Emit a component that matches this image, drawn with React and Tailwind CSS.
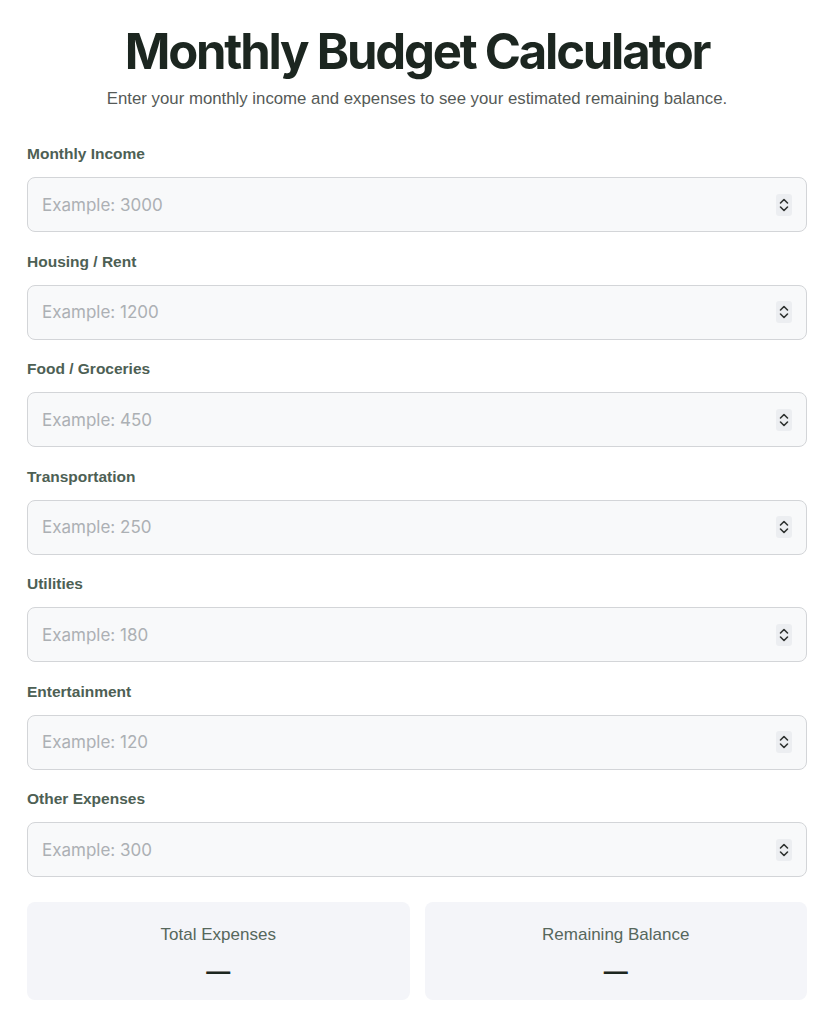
import { useState } from 'react'

const fields = [
  { id: 'income', label: 'Monthly Income', placeholder: 'Example: 3000' },
  { id: 'housing', label: 'Housing / Rent', placeholder: 'Example: 1200' },
  { id: 'food', label: 'Food / Groceries', placeholder: 'Example: 450' },
  { id: 'transport', label: 'Transportation', placeholder: 'Example: 250' },
  { id: 'utilities', label: 'Utilities', placeholder: 'Example: 180' },
  { id: 'entertainment', label: 'Entertainment', placeholder: 'Example: 120' },
  { id: 'other', label: 'Other Expenses', placeholder: 'Example: 300' }
]

function Spinner() {
  return (
    <span className="pointer-events-none absolute right-[15px] top-1/2 -translate-y-1/2 flex h-[22px] w-[16px] items-center justify-center rounded-[3px] bg-[#eceef1]">
      <svg width="10" height="16" viewBox="0 0 10 16" fill="none" stroke="#2f3331" strokeWidth="1.6" strokeLinecap="round" strokeLinejoin="round">
        <path d="M1.5 6 5 2.5 8.5 6" />
        <path d="M1.5 10 5 13.5 8.5 10" />
      </svg>
    </span>
  )
}

function Field({ id, label, placeholder, value, onChange }) {
  return (
    <div className="flex flex-col">
      <label htmlFor={id} className="mb-[13px] text-[15.5px] leading-[20px] font-bold text-[#4d6054]">
        {label}
      </label>
      <div className="relative">
        <input
          id={id}
          type="text"
          inputMode="decimal"
          value={value}
          onChange={(e) => onChange(id, e.target.value)}
          placeholder={placeholder}
          className="h-[55px] w-full rounded-[8px] border border-[#d3d5d8] bg-[#f8f9fa] pl-[14px] pr-[44px] font-['Inter',sans-serif] text-[17px] text-[#1f2a24] outline-none placeholder:text-[#acb0b4]"
        />
        <Spinner />
      </div>
    </div>
  )
}

export default function App() {
  const [values, setValues] = useState({})

  const setValue = (id, v) => setValues({ ...values, [id]: v })

  const num = (id) => {
    const n = parseFloat(values[id])
    return isNaN(n) ? null : n
  }

  const expenseIds = fields.slice(1).map((f) => f.id)
  const hasAny = expenseIds.some((id) => num(id) !== null)
  const total = expenseIds.reduce((sum, id) => sum + (num(id) || 0), 0)
  const income = num('income')

  const money = (n) => '$' + n.toLocaleString('en-US', { minimumFractionDigits: 2, maximumFractionDigits: 2 })

  return (
    <div className="min-h-screen bg-white font-['Liberation_Sans',Arial,sans-serif]">
      <main className="pl-[27px] pr-[22px] pt-[22px] pb-[24px]">
        <h1 className="text-center font-['Inter',sans-serif] text-[49px] leading-[60px] font-bold tracking-[-0.045em] text-[#1c2620]">
          Monthly Budget Calculator
        </h1>
        <p className="mt-[5px] text-center text-[16.8px] leading-[24px] text-[#555a57]">
          Enter your monthly income and expenses to see your estimated remaining balance.
        </p>

        <form className="mt-[33px] flex flex-col gap-[19.5px]" onSubmit={(e) => e.preventDefault()}>
          {fields.map((f) => (
            <Field key={f.id} {...f} value={values[f.id] || ''} onChange={setValue} />
          ))}
        </form>

        <div className="mt-[25px] grid grid-cols-2 gap-[15px]">
          <div className="flex h-[98px] flex-col items-center rounded-[8px] bg-[#f4f5f9] pt-[21px]">
            <span className="text-[17px] leading-[24px] text-[#56675c]">Total Expenses</span>
            <span className="mt-[11px] text-[24px] leading-[26px] font-bold text-[#1c2620]">
              {hasAny ? money(total) : '—'}
            </span>
          </div>
          <div className="flex h-[98px] flex-col items-center rounded-[8px] bg-[#f4f5f9] pt-[21px]">
            <span className="text-[17px] leading-[24px] text-[#56675c]">Remaining Balance</span>
            <span className="mt-[11px] text-[24px] leading-[26px] font-bold text-[#1c2620]">
              {income !== null ? money(income - total) : '—'}
            </span>
          </div>
        </div>
      </main>
    </div>
  )
}
